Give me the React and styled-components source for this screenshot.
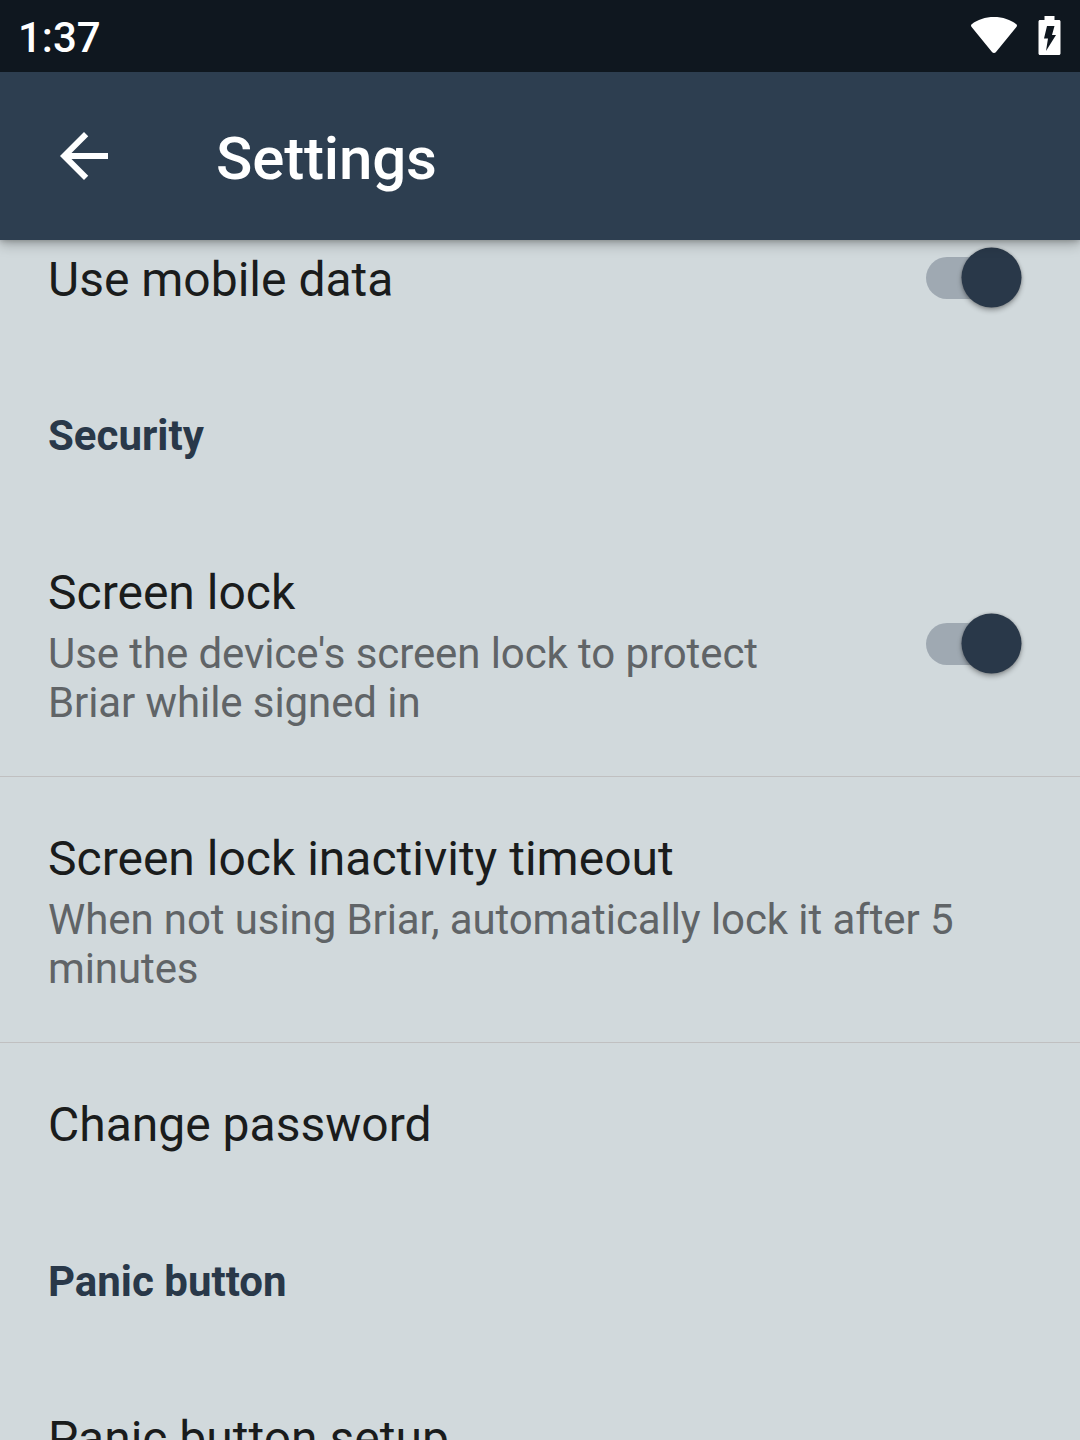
import React from "react";
import styled, { createGlobalStyle } from "styled-components";

const GlobalStyle = createGlobalStyle`
  *, *::before, *::after { box-sizing: border-box; }
  body { margin: 0; background: #d1d9dc; }
`;

const Screen = styled.div`
  display: flex;
  flex-direction: column;
  width: 1080px;
  height: 1440px;
  overflow: hidden;
  background: #d1d9dc;
  font-family: Roboto, sans-serif;
  color: #1a1c1c;
`;

const StatusBar = styled.div`
  display: flex;
  flex: none;
  align-items: center;
  justify-content: space-between;
  height: 72px;
  padding: 3px 19px 0 18px;
  background: #0f171f;
  color: #fff;
`;

const Clock = styled.span`
  font-size: 42px;
  font-weight: 500;
  line-height: 49px;
`;

const StatusIcons = styled.div`
  display: flex;
  align-items: center;
  gap: 21px;
  height: 69px;
  padding-bottom: 5px;

  svg { display: block; }
`;

const AppBar = styled.header`
  position: relative;
  z-index: 1;
  display: flex;
  flex: none;
  align-items: center;
  height: 168px;
  padding-left: 48px;
  background: #2d3e50;
  color: #fff;
  box-shadow: 0 4px 12px rgba(0, 0, 0, 0.28), 0 0 6px rgba(0, 0, 0, 0.25);
  clip-path: inset(0 0 -30px 0);
`;

const BackButton = styled.button`
  display: flex;
  width: 168px;
  height: 72px;
  padding: 0;
  border: 0;
  background: none;
  color: inherit;
`;

const Title = styled.h1`
  margin: 6px 0 0;
  font-size: 60px;
  font-weight: 500;
  line-height: 70px;
  letter-spacing: -0.15px;
`;

const Content = styled.main`
  flex: 1;
  min-height: 0;
  overflow: hidden;
`;

const List = styled.div`
  display: flex;
  flex-direction: column;
  margin-top: -42px;
`;

const Row = styled.section`
  display: flex;
  flex: none;
  align-items: center;
  justify-content: space-between;
  height: ${(p) => p.$height}px;
  padding: 54px 48px ${(p) => (p.$tall ? 49 : 48)}px;
  border-bottom: ${(p) => (p.$divided ? "1px solid #c0c0c1" : "0")};
`;

const RowText = styled.div`
  align-self: flex-start;
  width: ${(p) => (p.$narrow ? 774 : 984)}px;
`;

const RowTitle = styled.div`
  font-size: 48px;
  line-height: 56px;
`;

const Summary = styled.div`
  margin-top: 8px;
  font-size: 42px;
  line-height: 49px;
  letter-spacing: -0.09px;
  color: #606467;
`;

const Category = styled.h2`
  flex: none;
  height: 156px;
  margin: 0;
  padding: 56px 48px 51px;
  font-size: 42px;
  font-weight: 700;
  line-height: 49px;
  color: #293849;
`;

const Track = styled.div`
  display: flex;
  flex: none;
  align-items: center;
  justify-content: flex-end;
  width: 93px;
  height: 42px;
  margin-top: ${(p) => p.$shift}px;
  margin-right: 13px;
  border-radius: 21px;
  background: #9fa9b2;
`;

const Thumb = styled.div`
  flex: none;
  width: 60px;
  height: 60px;
  margin-right: -3px;
  border-radius: 50%;
  background: #293849;
  box-shadow: 0 3px 5px rgba(0, 0, 0, 0.3), 0 0 3px rgba(0, 0, 0, 0.2);
  transform: translate(-0.5px, -0.5px);
`;

function Switch({ shift }) {
  return (
    <Track $shift={shift} role="switch" aria-checked="true">
      <Thumb />
    </Track>
  );
}

function Preference({ title, summary, toggle, divided, shift = 0, height }) {
  return (
    <Row
      $tall={!!summary}
      $height={height || (summary ? 266 : 158)}
      $divided={divided}
    >
      <RowText $narrow={toggle}>
        <RowTitle>{title}</RowTitle>
        {summary && <Summary>{summary}</Summary>}
      </RowText>
      {toggle && <Switch shift={shift} />}
    </Row>
  );
}

export default function App() {
  return (
    <Screen>
      <GlobalStyle />
      <StatusBar>
        <Clock>1:37</Clock>
        <StatusIcons>
          <svg width="46" height="36" viewBox="0 0 46 36" fill="#fff">
            <path d="M.7 7.2C6.5 2.7 14.2 0 23 0s16.5 2.7 22.3 7.2c.8.6.9 1.7.3 2.5L25 34.9c-1 1.3-3 1.3-4 0L.4 9.7C-.2 8.9-.1 7.8.7 7.2Z" />
          </svg>
          <svg width="23" height="39" viewBox="0 0 23 39">
            <path
              fill="#fff"
              d="M6.5 0h10v4H21c.8 0 1.5.7 1.5 1.5v32c0 .8-.7 1.5-1.5 1.5H2c-.8 0-1.5-.7-1.5-1.5v-32C.5 4.700 1.200 4 2 4h4.500Z"
            />
            <path fill="#0f171f" d="M9 10h7.500l-2.500 9h4L8 35l2-12.500H6Z" />
          </svg>
        </StatusIcons>
      </StatusBar>
      <AppBar>
        <BackButton aria-label="Back">
          <svg width="72" height="72" viewBox="0 0 24 24" fill="currentColor">
            <path d="M20 11H7.830l5.590-5.590L12 4l-8 8 8 8 1.410-1.410L7.830 13H20v-2z" />
          </svg>
        </BackButton>
        <Title>Settings</Title>
      </AppBar>
      <Content>
        <List>
          <Preference title="Use mobile data" toggle shift={-3} height={157} />
          <Category>Security</Category>
          <Preference
            title="Screen lock"
            summary="Use the device's screen lock to protect Briar while signed in"
            toggle
            divided
            shift={-4}
          />
          <Preference
            title="Screen lock inactivity timeout"
            summary="When not using Briar, automatically lock it after 5 minutes"
            divided
          />
          <Preference title="Change password" />
          <Category>Panic button</Category>
          <Preference title="Panic button setup" />
        </List>
      </Content>
    </Screen>
  );
}
